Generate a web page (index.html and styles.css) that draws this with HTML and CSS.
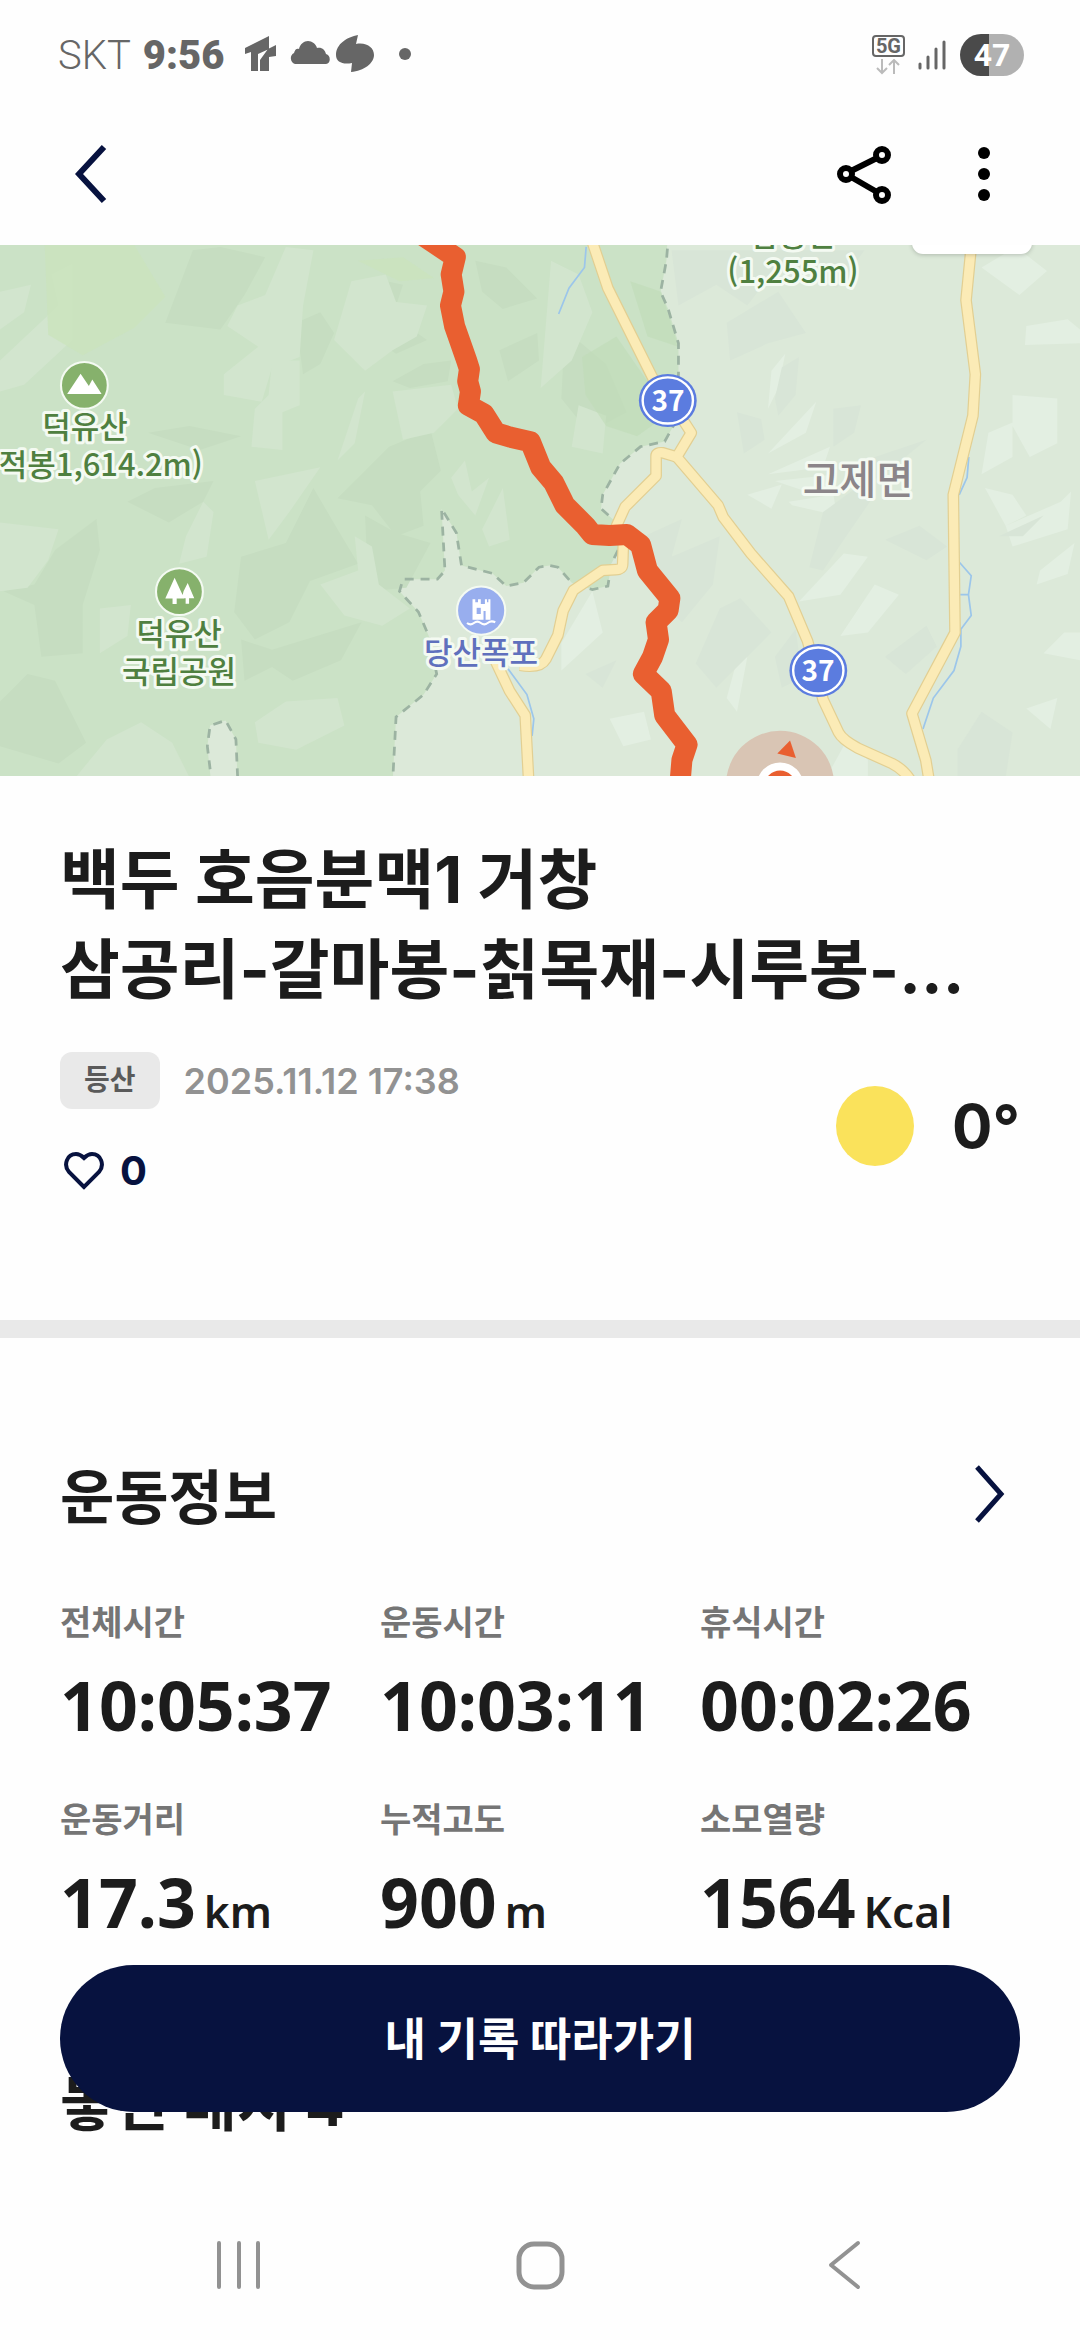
FILE: index.html
```
<!doctype html>
<html lang="ko">
<head>
    <meta charset="utf-8">
    <meta name="viewport" content="width=device-width">
    <title>운동 기록</title>
    <link rel="stylesheet" href="styles.css">
</head>

<body>
<div class="status">
    <div class="status_left">
        <span class="carrier">SKT</span>
        <span class="clock">9:56</span>
        <svg class="status_icons" width="168" height="40" viewBox="0 0 168 40" fill="#666">
            <path d="M1 13L25 1v13l-11 5v17H7V17l-6 2zM16 36V25l8-11 8-4v11l-7 1v14z"/>
            <path d="M51 29a6 6 0 0 1-1-11c1-4 3-5 5-4 1-5 5-8 9-8s8 3 9 7c5-1 8 2 9 6 5 1 5 10 0 10z"/>
            <path d="M114 0l-2 9c11-2 18 4 18 11 0 8-10 16-23 17l1-9c-9 2-16-1-16-8C92 9 103 2 114 0z"/>
            <circle cx="161" cy="19" r="6"/>
        </svg>
    </div>
    <div class="status_right">
        <div class="network">
            <span class="network_type">5G</span>
            <svg width="26" height="16" viewBox="0 0 26 16" fill="none" stroke="#bbb" stroke-width="2">
                <path d="M7 0v14M2 9l5 5 5-5M19 15V1M14 6l5-5 5 5"/>
            </svg>
        </div>
        <svg width="28" height="30" viewBox="0 0 28 30" stroke="#666" stroke-width="3" stroke-linecap="round">
            <path d="M2 24v4M10 17v11M18 9v19M26 2v26"/>
        </svg>
        <span class="battery">47</span>
    </div>
</div>

<header class="header">
    <button class="icon_btn" type="button" aria-label="뒤로">
        <svg width="32" height="60" viewBox="0 0 32 60" fill="none" stroke="#07123f" stroke-width="6">
            <path d="M29 3L4 30l25 27"/>
        </svg>
    </button>
    <div class="header_menu">
        <button class="icon_btn" type="button" aria-label="공유">
            <svg width="56" height="60" viewBox="0 0 56 60" fill="none" stroke="#000" stroke-width="6">
                <circle cx="10" cy="30" r="6"/>
                <circle cx="46" cy="11" r="6"/>
                <circle cx="46" cy="51" r="6"/>
                <path d="M15 27l26-13M15 33l26 15"/>
            </svg>
        </button>
        <button class="icon_btn" type="button" aria-label="더보기">
            <svg width="14" height="60" viewBox="0 0 14 60">
                <circle cx="7" cy="9" r="6"/>
                <circle cx="7" cy="30" r="6"/>
                <circle cx="7" cy="51" r="6"/>
            </svg>
        </button>
    </div>
</header>

<svg class="map" viewBox="0 0 1080 531">
    <defs>
        <g id="roads">
            <path d="M1718 0l47 140 130 260 80 110 32 50-42 70-40-12q-20-2-20 10v57l-90 90-25 55 20 50-2 60q0 16-20 17l-38 2-85 58-30 60-15 70-35 70q-16 28-75 18"/>
            <path d="M1965 630l120 140 15 35 80 105 110 125 55 130 45 170 45 95q10 20 55 45l100 45q40 20 60 60"/>
            <path d="M2822 0l-17 175 27 215-7 120-57 230 5 400-125 235 40 135 10 60"/>
            <path d="M1435 1215l45 95 45 70 10 190"/>
        </g>
    </defs>
    <rect width="1080" height="531" fill="#dce9d9"/>
    <g transform="translate(0 -5) scale(.3444)">
        <!-- 능선 -->
        <g fill="#e3efe2">
            <path d="M2230 620l140-150-30 90zM2230 680l180-80-20 60zM2250 700l180-20-60 60zM2170 740l100-30-30 70zM2290 760l130-20 10 60-130-30z"/>
            <path d="M2940 450l130 10v130l-80 40-50-90zM2980 250l120-20 36 30v40l-160 5zM2850 80l100-60 90 70-80 70zM2870 560l70-30v100l-90 50z"/>
            <path d="M2920 830l160-70 30-30-10 110-160 50zM3020 960l100-80-20 90-90 30zM2860 720l80 20 40 60-60 30zM3030 1200l60-60h46v80z"/>
            <path d="M2500 1060l-60 90 80-10 90-110-70-30zM2320 1050l120-20 80-110-70-10zM1630 1250l120-110-30-120-90 150zM1770 1390l100-20 20 80-80 20z"/>
            <path d="M2240 380l40-50-20 100-30 60zM2110 1330l30-110 30-10-30 160zM2400 1560l60-110 60 60v50zM2980 1360l90-30-20 90z"/>
        </g>
        <g fill="#d8e5d7">
            <path d="M1950 30h560l-80 110-160-80-100 130-90-60-110 60zM2110 240l150-90 80 120-110 30-110 50z"/>
            <path d="M2250 460l20-90 50-30-10 110-50 60zM2140 500l70 20 10 60-60 40zM2420 490l80-10-20 80-60 40zM2510 640l180-60-110 90-100 60z"/>
            <path d="M2350 950l40-160 150-110v60l-90 130-60 90zM1870 860l110-50-30 110 140-60-20 140-90 110-60-60z"/>
            <path d="M2090 1070l60-30 90 100-160 160-60-70zM2250 1210l60-80 20 140-60 30zM2570 870l100-40 80 60-60 40zM2900 860l130-60-60 60zM1700 1260l90-40-40 80z"/>
            <path d="M2780 1480l70-110 90 60-20 130h-140zM2570 1210l120-90 30 60-90 80z"/>
        </g>

        <!-- 국립공원 영역 -->
        <path fill="#cbe2c6" d="M0 0H1938l-3 60-17 90 22 50 30 100v90l-15 150-25 45-70 15-60 50-50 90-5 40 45 40 5 80-20 40-10 65-45 10-60-20-40-45-25-5-30 5-45 45-50 10-40-37-90-23-15-95-43-70 10 180-22 25h-100l-10 35 55 60 30 70 23 110-38 60-80 65-10 190H690l-5-125-30-55-45 15-8 60 11 105H0z"/>
        <g fill="#c6ddc1">
            <path d="M560 30l80-10 130 30-60 110-70 100-160-20zM1080 110l90 20-30 90 100 70-90 40-90-60zM370 760l120 60 100-60 30-60-170 20z"/>
            <path d="M160 900l120-90 10 90-50 160v140l-120 10-20-150-90-40 90-20zM700 920l130-40 80-160 70 120 60 100-140 50-60 120-100 50-60-80z"/>
            <path d="M980 750l150-150 120-50 30 120-60 60 10 100-80 30-70-90zM1060 800l90 50 100 30-70 130-110 10zM0 1340l80-80 80 20 90 180-80 60-170-50z"/>
            <path d="M860 240l70-30 40 60-40 90-50 30zM1380 60l90 20 90 90-100 30-60-50zM1140 410l90-50 80-10-10 60-110 20zM1450 320l110-50 5 80-90 60z"/>
            <path d="M700 1160l90 30 260-80-60 110-140 60-60-40-80 40zM1640 260l120 100 60 140-110 60-80-100zM430 560l120-20 150 30-120 40z"/>
        </g>
        <g fill="#d2e5ce">
            <path d="M0 350l170-160-20-90 60-30v220l-140 130-70 20zM0 150l90-20-20 80-70 50zM650 390l100-80-90-60 30-60 80-30 60-140 80 10-30 160-10 150-80 30-30 100-110-20z"/>
            <path d="M790 350h80v130l-50 20v110l-90-10 10-110 40-40zM970 290l50-170 100-20 30 80 90 10-30 90-70 40-80 60zM740 700l190-40-90 130-60 80z"/>
            <path d="M0 820l170 20-30 90-60 80-80 10zM540 860l50-100 30 30-20 130-80 20zM1140 440l170-20 20 70-70 70-90 20zM980 640l60-180 20-20-30 150zM1310 690l40-50 20 90 50-40-40 110-50-60z"/>
            <path d="M930 1000l110-40-10-100 50 30 20 110 90 70-80 50-110-30zM290 1070l90-10-10 90-80 50zM740 1400l90-60 150-10 20 80-140 70-110-20zM220 1560l90-110 100-50 90 60 50 100z"/>
            <path d="M1400 840l60-120 20 150-60 20zM1600 60l80 40 40 110-60 140-90 80zM1680 480l80 30-10 110-90-20z"/>
        </g>
        <g fill="#cbe3bd" opacity=".8">
            <path d="M130 15h260l90 150-90 90-150 80-100-60zM1040 60l130-10 90 60-100 10z"/>
        </g>
        <path fill="#bfdcb8" opacity=".6" d="M1690 340l100-60 90 130 40 110-70 50-90-30-60-90zM1830 120l90 30 50 160-90-30z"/>

        <!-- 국립공원 경계 -->
        <g fill="none" stroke="#9cb3a2" stroke-width="8" stroke-dasharray="26 20">
            <path d="M1938 25l-3 35-17 90 22 50 30 100v90l-15 150-25 45-70 15-60 50-50 90-5 40 45 40 5 80-20 40-10 65-45 10-60-20-40-45-25-5-30 5-45 45-50 10-40-37-90-23-15-95-43-70 10 180-22 25h-100l-10 35 55 60 30 70 23 110-38 60-80 65-10 190"/>
            <path d="M690 1560l-5-110-30-55-45 15-8 60 11 90"/>
        </g>

        <!-- 하천 -->
        <path fill="none" stroke="#9cc6ea" stroke-width="5" d="M1475 1245l55 75 20 70-5 50M2813 630l-5 60-23 50M2785 935l35 40-8 55 8 60-30 40v50l-20 70-60 80-30 90M1702 20l-5 60-45 60-30 75M2788 1030h24"/>

        <!-- 도로 -->
        <use href="#roads" fill="none" stroke-linejoin="round" stroke="#e2cf92" stroke-width="34"/>
        <use href="#roads" fill="none" stroke-linejoin="round" stroke="#fbebb6" stroke-width="27"/>

        <!-- 이동 경로 -->
        <path fill="none" stroke="#e95f30" stroke-width="61" stroke-linejoin="round" d="M1225-15l97 65-12 50 8 50-10 40 12 60 35 100 8 25-5 35 8 30-6 40 45 25 35 55 40 12 60 14 30 74 38 45 32 65 60 60 20 25 50 3 50-3 40 30 20 75 65 80-5 35-35 35 7 50-17 50-27 50 52 50 10 70 65 85-15 45-5 60"/>

        <!-- 현재 위치 -->
        <circle cx="2265" cy="1582" r="157" fill="#d9c5b4"/>
        <path d="M2294 1453l-37 38 54 13z" fill="#e95f30"/>
        <circle cx="2265" cy="1585" r="68" fill="#fff"/>
        <circle cx="2265" cy="1585" r="45" fill="#e95f30"/>

        <!-- 명소 -->
        <g stroke="#f4faf2" stroke-width="6">
            <circle cx="245" cy="422" r="68" fill="#86b16c"/>
            <circle cx="521" cy="1021" r="68" fill="#86b16c"/>
            <circle cx="1397" cy="1076" r="70" fill="#98aeee"/>
        </g>
        <g fill="#fff">
            <path d="M195 447l39-59 24 36 10-19 27 42z"/>
            <path d="M507 981l28 60h-22v16h-12v-16h-21zM545 996l19 44h-15v16h-10v-16h-11l5-20z"/>
            <path d="M1372 1043h8v9h8v-9h8v14h12v-14h6v9h4v-9h6v60h-14v-26h-6v26h-32z"/>
        </g>
        <path d="M1384 1068h12v18h-12z" fill="#98aeee"/>
        <path d="M1356 1112q10 8 20 0t20 0 20 0 22-2" fill="none" stroke="#fff" stroke-width="6"/>

        <!-- 국도 번호판 -->
        <g fill="#5b7cdf">
            <ellipse cx="1939" cy="466" rx="84" ry="77"/>
            <ellipse cx="2376" cy="1250" rx="84" ry="77"/>
            <ellipse cx="1939" cy="466" rx="73" ry="67" stroke="#fff" stroke-width="7"/>
            <ellipse cx="2376" cy="1250" rx="73" ry="67" stroke="#fff" stroke-width="7"/>
        </g>
    </g>
    <g class="map_label">
        <text x="793" y="1">삼봉산</text>
        <text x="793" y="38">(1,255m)</text>
        <text x="85" y="193">덕유산</text>
        <text x="81" y="231">(향적봉1,614.2m)</text>
        <text x="179" y="400">덕유산</text>
        <text x="179" y="438">국립공원</text>
        <text class="water" x="481" y="419">당산폭포</text>
        <text class="town" x="858" y="249">고제면</text>
    </g>
    <g class="map_route">
        <text x="668" y="166">37</text>
        <text x="818" y="436">37</text>
    </g>
    <rect class="map_control" x="912" y="-40" width="120" height="49" rx="11"/>
</svg>

<main>
    <section class="summary">
        <h1 class="title">백두 호음분맥1 거창<br>삼공리-갈마봉-칡목재-시루봉-...</h1>
        <div class="summary_row">
            <div class="summary_info">
                <div class="meta">
                    <span class="tag">등산</span>
                    <time class="date" datetime="2025-11-12T17:38">2025.11.12 17:38</time>
                </div>
                <button class="like" type="button" aria-label="좋아요 0">
                    <svg width="40" height="38" viewBox="0 0 40 38" fill="none" stroke="#07123f" stroke-width="4">
                        <path d="M20 35L5 20C-1 13 3 2 12 2c4 0 6 2 8 4 2-2 4-4 8-4 9 0 13 11 7 18z"/>
                    </svg>
                    <span>0</span>
                </button>
            </div>
            <div class="weather">
                <span class="sun"></span>
                <span class="temp">0°</span>
            </div>
        </div>
    </section>

    <section class="workout">
        <div class="section_head">
            <h2>운동정보</h2>
            <button class="icon_btn more" type="button" aria-label="운동정보 더보기">
                <svg width="32" height="60" viewBox="0 0 32 60" fill="none" stroke="#07123f" stroke-width="5">
                    <path d="M3 3l24 27L3 57"/>
                </svg>
            </button>
        </div>
        <dl class="stats">
            <div>
                <dt>전체시간</dt>
                <dd>10:05:37</dd>
            </div>
            <div>
                <dt>운동시간</dt>
                <dd>10:03:11</dd>
            </div>
            <div>
                <dt>휴식시간</dt>
                <dd>00:02:26</dd>
            </div>
            <div>
                <dt>운동거리</dt>
                <dd>17.3<small>km</small></dd>
            </div>
            <div>
                <dt>누적고도</dt>
                <dd>900<small>m</small></dd>
            </div>
            <div>
                <dt>소모열량</dt>
                <dd>1564<small>Kcal</small></dd>
            </div>
        </dl>
        <h2>놓친 배지 4</h2>
    </section>
</main>

<button class="follow" type="button">내 기록 따라가기</button>

<nav class="nav">
    <button class="icon_btn" type="button" aria-label="최근 앱">
        <svg width="50" height="50" viewBox="0 0 50 50" stroke="#929292" stroke-width="4" stroke-linecap="round">
            <path d="M5 3v44M25 3v44M44 3v44"/>
        </svg>
    </button>
    <button class="icon_btn" type="button" aria-label="홈">
        <svg width="50" height="50" viewBox="0 0 50 50" fill="none" stroke="#929292" stroke-width="5">
            <rect x="4" y="4" width="43" height="43" rx="15"/>
        </svg>
    </button>
    <button class="icon_btn" type="button" aria-label="뒤로">
        <svg width="50" height="50" viewBox="0 0 50 50" fill="none" stroke="#929292" stroke-width="4" stroke-linecap="round" stroke-linejoin="round">
            <path d="M42 3L15 25l27 22"/>
        </svg>
    </button>
</nav>
</body>

</html>
```
FILE: styles.css
```
body,
h1,
h2,
dl,
dd {
    margin: 0;
    padding: 0;
}

body {
    background-color: #fefefe;
    color: #1c1c1c;
    font-family: Inter, "Noto Sans CJK KR", sans-serif;
}

button {
    padding: 0;
    border: 0;
    background: none;
    font-family: inherit;
    cursor: pointer;
}

svg {
    display: block;
}

/*상태바*/
.status {
    display: flex;
    justify-content: space-between;
    align-items: center;
    height: 110px;
    padding: 0 56px 0 58px;
    color: #666;
}

.status_left,
.status_right {
    display: flex;
    align-items: center;
}

.carrier {
    font: 300 40px Roboto, sans-serif;
}

.clock {
    margin: 0 20px 0 12px;
    font: 900 40px Roboto, sans-serif;
}

.network {
    display: flex;
    flex-direction: column;
    align-items: center;
    gap: 2px;
    margin-right: 13px;
}

.network_type {
    padding: 0 2px;
    border: 2px solid #666;
    border-radius: 4px;
    font: 700 20px/18px Roboto, sans-serif;
}

.battery {
    width: 64px;
    margin-left: 14px;
    border-radius: 21px;
    background: linear-gradient(90deg, #4a4a4a 46%, #b1b1b1 46%);
    color: #fff;
    font: 700 32px/42px Roboto, sans-serif;
    text-align: center;
}

/*헤더*/
.header {
    display: flex;
    justify-content: space-between;
    align-items: center;
    height: 127px;
    margin-bottom: 8px;
    padding: 0 89px 0 75px;
}

.header_menu {
    display: flex;
    gap: 85px;
}

/*지도*/
.map {
    width: 100%;
    height: auto;
    overflow: hidden;
}

.map_label {
    fill: #4f8040;
    stroke: #f4faf2;
    stroke-width: 6px;
    stroke-linejoin: round;
    paint-order: stroke;
    font: 500 31px "Noto Sans CJK KR", sans-serif;
    text-anchor: middle;
}

.map_label .water {
    fill: #5f70bd;
}

.map_label .town {
    fill: #8b8589;
    font-size: 40px;
}

.map_route {
    fill: #fff;
    font: 700 28px "Noto Sans CJK KR", sans-serif;
    text-anchor: middle;
}

.map_control {
    fill: #fff;
    filter: drop-shadow(0 1px 2px rgba(0, 0, 0, .2));
}

/*기록 요약*/
.summary {
    padding: 59px 60px 121px;
    border-bottom: 18px solid #e9e9e9;
}

.title {
    font-size: 65px;
    line-height: 90px;
    font-weight: 700;
    white-space: nowrap;
}

.summary_row {
    display: flex;
    justify-content: space-between;
    align-items: center;
    margin-top: 37px;
}

.summary_info {
    display: flex;
    flex-direction: column;
    align-items: flex-start;
    gap: 34px;
}

.meta {
    display: flex;
    align-items: center;
    gap: 24px;
}

.tag {
    padding: 0 24px;
    border-radius: 12px;
    background-color: #e9e9e9;
    color: #5a5a5a;
    font-size: 28px;
    line-height: 57px;
    font-weight: 600;
}

.date {
    color: #929292;
    font-size: 36px;
    font-weight: 600;
}

.like {
    display: flex;
    align-items: center;
    gap: 16px;
    padding-left: 4px;
    color: #07123f;
    font-size: 40px;
    line-height: 56px;
    font-weight: 700;
}

.weather {
    display: flex;
    align-items: center;
    gap: 38px;
}

.sun {
    width: 78px;
    height: 80px;
    border-radius: 50%;
    background-color: #fae25b;
}

.temp {
    font-size: 60px;
    line-height: 80px;
    font-weight: 700;
}

/*운동정보*/
.workout {
    padding: 120px 60px 196px;
}

.section_head {
    display: flex;
    justify-content: space-between;
    align-items: center;
}

h2 {
    font-size: 59px;
    line-height: 80px;
    font-weight: 700;
}

.more {
    margin: 0 14px 8px 0;
}

.stats {
    display: grid;
    grid-template-columns: repeat(3, 1fr);
    row-gap: 49px;
    margin: 59px 0 114px;
}

dt {
    margin-bottom: 16px;
    color: #757575;
    font-size: 34px;
    line-height: 52px;
    font-weight: 600;
}

dd {
    font-family: "Noto Sans", sans-serif;
    font-size: 68px;
    line-height: 80px;
    font-weight: 700;
    white-space: nowrap;
}

small {
    margin-left: 8px;
    font-size: 44px;
    font-weight: 600;
}

/*하단 고정 버튼*/
.follow {
    position: fixed;
    left: 60px;
    right: 60px;
    bottom: 228px;
    height: 147px;
    padding-bottom: 4px;
    border-radius: 74px;
    background-color: #07123f;
    color: #fff;
    font-size: 45px;
    font-weight: 700;
}

.nav {
    position: fixed;
    left: 0;
    right: 0;
    bottom: 0;
    display: flex;
    justify-content: space-between;
    align-items: center;
    height: 150px;
    padding: 0 214px;
    background-color: #fefefe;
}
```
